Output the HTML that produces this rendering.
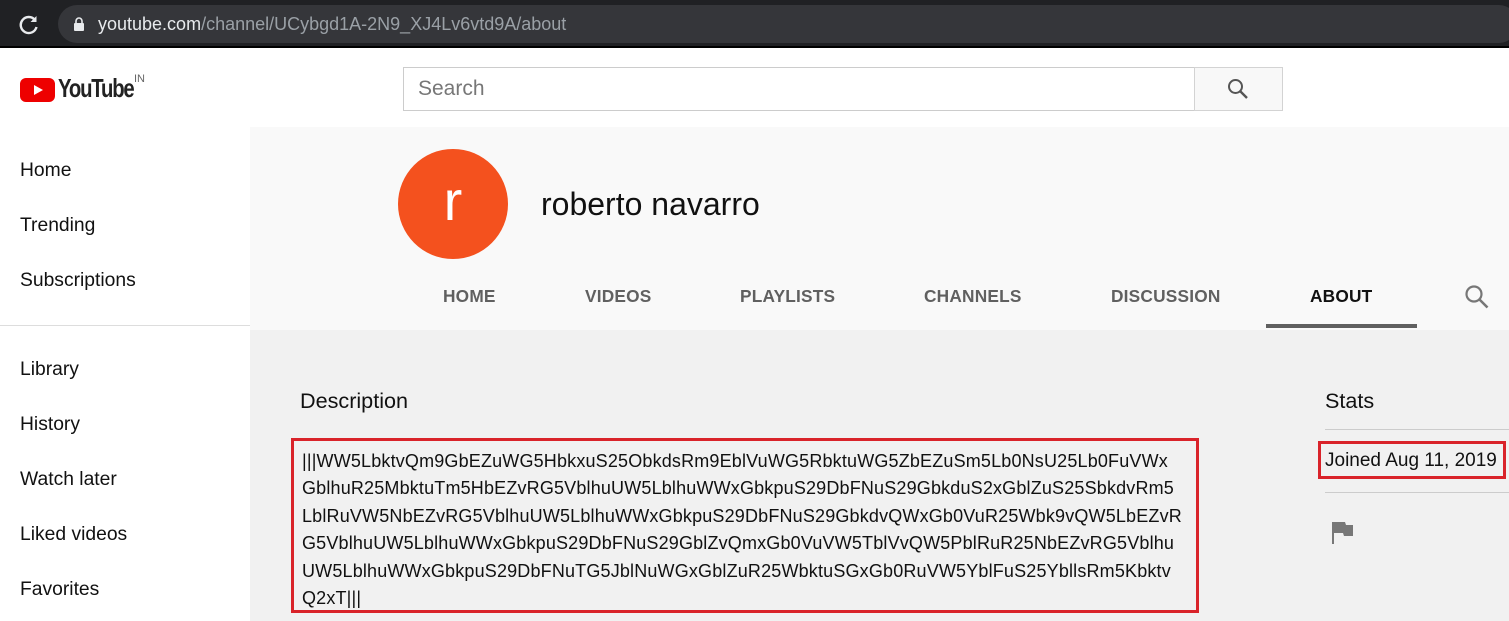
<!DOCTYPE html>
<html><head><style>
*{margin:0;padding:0;box-sizing:border-box}
body{width:1509px;height:621px;overflow:hidden;font-family:"Liberation Sans",Arial,sans-serif;background:#fff;position:relative}
.abs{position:absolute}
#top{left:0;top:0;width:1509px;height:48px;background:#202124;border-bottom:2px solid #000}
#url{left:58px;top:5px;width:1460px;height:38px;background:#35363a;border-radius:19px;color:#9aa0a6;font-size:18px;line-height:38px;padding-left:40px}
#url b{color:#e8eaed;font-weight:normal}
.side{left:20px;font-size:19.3px;color:#111}
#hdr{left:250px;top:127px;width:1259px;height:203px;background:#f9f9f9}
#main{left:250px;top:330px;width:1259px;height:291px;background:#f1f1f1}
.tab{top:286px;font-size:17.3px;color:#606060;font-weight:bold;letter-spacing:.2px}
.desc{left:302px;top:448px;font-size:18px;line-height:27.4px;color:#111;letter-spacing:.17px}
</style></head><body>
<div id="top" class="abs"></div>
<div id="url" class="abs"><b>youtube.com</b>/channel/UCybgd1A-2N9_XJ4Lv6vtd9A/about</div>
<svg class="abs" style="left:19px;top:15px" width="20" height="20" viewBox="0 0 20 20"><path d="M16 5A8 8 0 1 0 17.5 12" fill="none" stroke="#e8eaed" stroke-width="2.4"/><path d="M17.5 1v6h-6z" fill="#e8eaed"/></svg>
<svg class="abs" style="left:73px;top:17px" width="12" height="14" viewBox="0 0 12 14"><rect x="1" y="6" width="10" height="8" rx="1" fill="#e8eaed"/><path d="M3 6V4a3 3 0 0 1 6 0v2" fill="none" stroke="#e8eaed" stroke-width="1.6"/></svg>
<svg class="abs" style="left:20px;top:78px" width="35" height="24" viewBox="0 0 35 24"><rect width="35" height="24" rx="6" fill="#e00"/><path d="M14 7l9 5-9 5z" fill="#fff"/></svg>
<div class="abs" style="left:58px;top:73px;font-size:26px;font-weight:bold;letter-spacing:-1.5px;color:#222;transform:scaleX(.78);transform-origin:left">YouTube</div>
<div class="abs" style="left:134px;top:73px;font-size:11px;color:#666">IN</div>
<div class="abs" style="left:403px;top:67px;width:792px;height:44px;border:1px solid #ccc;border-right:none;font-size:21px;color:#777;line-height:42px;padding-left:14px">Search</div>
<div class="abs" style="left:1194px;top:67px;width:89px;height:44px;border:1px solid #d3d3d3;background:#f8f8f8"></div>
<svg class="abs" style="left:1227px;top:78px" width="22" height="22" viewBox="0 0 22 22"><circle cx="8.5" cy="8.5" r="6.5" fill="none" stroke="#555" stroke-width="2"/><path d="M13 13l7 7" stroke="#555" stroke-width="2.4"/></svg>
<div class="abs side" style="top:160px">Home</div>
<div class="abs side" style="top:215px">Trending</div>
<div class="abs side" style="top:270px">Subscriptions</div>
<div class="abs" style="left:0;top:325px;width:250px;height:1px;background:#ddd"></div>
<div class="abs side" style="top:359px">Library</div>
<div class="abs side" style="top:414px">History</div>
<div class="abs side" style="top:469px">Watch later</div>
<div class="abs side" style="top:524px">Liked videos</div>
<div class="abs side" style="top:579px">Favorites</div>
<div id="hdr" class="abs"></div>
<div id="main" class="abs"></div>
<div class="abs" style="left:398px;top:149px;width:110px;height:110px;border-radius:50%;background:#f4511e;color:#fff;font-size:56px;text-align:center;line-height:104px">r</div>
<div class="abs" style="left:541px;top:186px;font-size:32px;color:#111">roberto navarro</div>
<div class="abs tab" style="left:443px">HOME</div>
<div class="abs tab" style="left:585px">VIDEOS</div>
<div class="abs tab" style="left:740px">PLAYLISTS</div>
<div class="abs tab" style="left:924px">CHANNELS</div>
<div class="abs tab" style="left:1111px">DISCUSSION</div>
<div class="abs tab" style="left:1310px;color:#111">ABOUT</div>
<div class="abs" style="left:1266px;top:324px;width:151px;height:4px;background:#606060"></div>
<svg class="abs" style="left:1464px;top:284px" width="26" height="26" viewBox="0 0 26 26"><circle cx="10" cy="10" r="7.5" fill="none" stroke="#777" stroke-width="2.2"/><path d="M15.5 15.5l8 8" stroke="#777" stroke-width="2.6"/></svg>
<div class="abs" style="left:300px;top:388px;font-size:21.6px;color:#111">Description</div>
<div class="abs" style="left:291px;top:438px;width:908px;height:175px;border:3px solid #d9232a"></div>
<div class="abs desc">|||WW5LbktvQm9GbEZuWG5HbkxuS25ObkdsRm9EblVuWG5RbktuWG5ZbEZuSm5Lb0NsU25Lb0FuVWx<br>GblhuR25MbktuTm5HbEZvRG5VblhuUW5LblhuWWxGbkpuS29DbFNuS29GbkduS2xGblZuS25SbkdvRm5<br>LblRuVW5NbEZvRG5VblhuUW5LblhuWWxGbkpuS29DbFNuS29GbkdvQWxGb0VuR25Wbk9vQW5LbEZvR<br>G5VblhuUW5LblhuWWxGbkpuS29DbFNuS29GblZvQmxGb0VuVW5TblVvQW5PblRuR25NbEZvRG5Vblhu<br>UW5LblhuWWxGbkpuS29DbFNuTG5JblNuWGxGblZuR25WbktuSGxGb0RuVW5YblFuS25YbllsRm5Kbktv<br>Q2xT|||</div>
<div class="abs" style="left:1325px;top:388px;font-size:21.6px;color:#111">Stats</div>
<div class="abs" style="left:1325px;top:429px;width:184px;height:1px;background:#ccc"></div>
<div class="abs" style="left:1318px;top:441px;width:188px;height:38px;border:3px solid #d9232a"></div>
<div class="abs" style="left:1325px;top:450px;font-size:19px;color:#111">Joined Aug 11, 2019</div>
<div class="abs" style="left:1325px;top:492px;width:184px;height:1px;background:#ccc"></div>
<svg class="abs" style="left:1331px;top:520px" width="24" height="26" viewBox="0 0 24 26"><path d="M1 2h2v22H1zM3 2h11l1 3h7v11h-9l-1-3H3z" fill="#777"/></svg>
</body></html>
